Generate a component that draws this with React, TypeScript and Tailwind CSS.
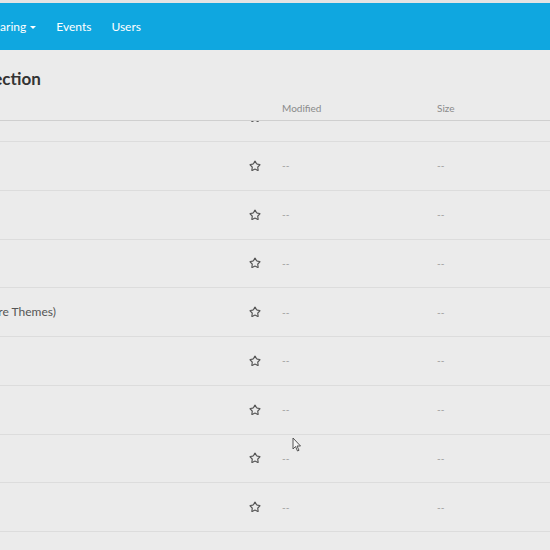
import { Star } from 'lucide-react'

const ROWS = [
  { name: '', mod: '', size: '' },
  { name: '', mod: '--', size: '--' },
  { name: '', mod: '--', size: '--' },
  { name: '', mod: '--', size: '--' },
  { name: '(Hardware Themes)', mod: '--', size: '--' },
  { name: '', mod: '--', size: '--' },
  { name: '', mod: '--', size: '--' },
  { name: '', mod: '--', size: '--' },
  { name: '', mod: '--', size: '--' },
  { name: '', mod: '--', size: '--' },
]

function Row({ name, mod, size }: { name: string; mod: string; size: string }) {
  return (
    <div className="flex items-center h-[48.75px] shrink-0 border-b border-[#dcdcdc]">
      <div className="w-[245px] shrink-0 overflow-hidden text-[12px] text-[#555] whitespace-nowrap">
        <span className="block -ml-[46px]">{name}</span>
      </div>
      <div className="w-[20px] shrink-0 flex justify-center">
        <Star size={12} strokeWidth={2.3} className="text-[#555]" />
      </div>
      <div className="w-[172px] shrink-0 pl-[17px] text-[10px] text-[#999]">{mod}</div>
      <div className="flex-1 text-[10px] text-[#999]">{size}</div>
    </div>
  )
}

export default function App() {
  return (
    <div
      className="w-[550px] h-[550px] overflow-hidden bg-[#ebebeb] flex flex-col relative"
      style={{ fontFamily: 'Lato, "Open Sans", sans-serif' }}
    >
      {/* top strip */}
      <div className="h-[3px] bg-[#e4e4e4] shrink-0" />

      {/* Navbar */}
      <div className="h-[47px] bg-[#0fa7e0] shrink-0 flex items-center gap-[20px] text-[12px] text-white whitespace-nowrap">
        <div className="-ml-[13px] flex items-center gap-[4px]">
          <span>Sharing</span>
          <span className="inline-block w-0 h-0 border-l-[3px] border-r-[3px] border-t-[3px] border-l-transparent border-r-transparent border-t-white mt-[2px]" />
        </div>
        <span>Events</span>
        <span>Users</span>
      </div>

      {/* Title */}
      <div className="h-[24px] mt-[17px] shrink-0 flex items-center overflow-hidden">
        <h1 className="-ml-[36px] text-[17px] font-bold text-[#333] whitespace-nowrap">Collection</h1>
      </div>

      {/* Column header */}
      <div className="h-[13px] mt-[11px] shrink-0 flex items-center text-[10px] text-[#8a8a8a]">
        <div className="w-[265px] shrink-0" />
        <div className="w-[155px] shrink-0 pl-[17px]">Modified</div>
        <div className="flex-1 pl-[17px]">Size</div>
      </div>

      {/* Rows (scrolled) */}
      <div className="flex-1 min-h-0 overflow-hidden mt-[5px] border-t border-[#cfcfcf]">
        <div className="flex flex-col -mt-[27.75px]">
          {ROWS.map((r, i) => (
            <Row key={i} name={r.name} mod={r.mod} size={r.size} />
          ))}
        </div>
      </div>

      {/* Cursor */}
      <svg className="absolute left-[292px] top-[437px]" width="10" height="15" viewBox="0 0 10 15">
        <path d="M1 1 L1 12 L3.5 9.5 L5.5 14 L7 13.3 L5 9 L8.5 9 Z" fill="#f5f5f5" stroke="#444" strokeWidth="0.9" strokeLinejoin="round" />
      </svg>
    </div>
  )
}
